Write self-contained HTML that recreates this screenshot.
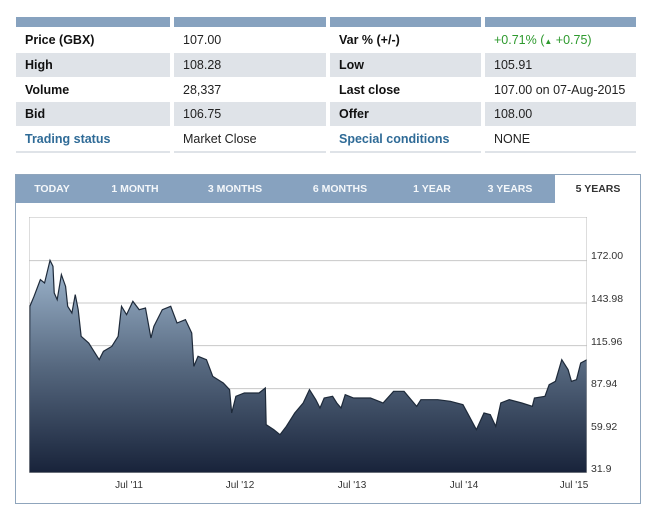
<!DOCTYPE html>
<html><head><style>
body{margin:0;width:660px;height:510px;background:#fff;font-family:"Liberation Sans",Arial,sans-serif;position:relative;overflow:hidden}
.a{position:absolute}
.hb{top:17px;height:10px;background:#87a2bf}
.c{position:absolute;height:24px;line-height:24px;font-size:12.5px;color:#222;padding-left:9px;box-sizing:border-box}
.g{background:#dfe3e8}
.b{font-weight:bold;color:#111}
.bl{color:#2f6b97;font-weight:bold}
.tab{position:absolute;top:175px;height:28px;line-height:28px;font-size:10.5px;font-weight:bold;color:#f4f7fa;text-align:center}
.yl{position:absolute;left:591px;font-size:10.5px;color:#333}
.xl{position:absolute;top:480px;font-size:10px;color:#333;width:40px;margin-left:-20px;text-align:center}
</style></head><body>
<div class="a hb" style="left:16px;width:154px"></div>
<div class="a hb" style="left:174px;width:152px"></div>
<div class="a hb" style="left:330px;width:151px"></div>
<div class="a hb" style="left:485px;width:151px"></div>

<div class="c b" style="left:16px;top:28px;width:154px">Price (GBX)</div>
<div class="c" style="left:174px;top:28px;width:152px">107.00</div>
<div class="c b" style="left:330px;top:28px;width:151px">Var % (+/-)</div>
<div class="c" style="left:485px;top:28px;width:151px;color:#2e9a2e">+0.71% (<span style="font-size:8px">&#9650;</span> +0.75)</div>

<div class="c b g" style="left:16px;top:53px;width:154px">High</div>
<div class="c g" style="left:174px;top:53px;width:152px">108.28</div>
<div class="c b g" style="left:330px;top:53px;width:151px">Low</div>
<div class="c g" style="left:485px;top:53px;width:151px">105.91</div>

<div class="c b" style="left:16px;top:78px;width:154px">Volume</div>
<div class="c" style="left:174px;top:78px;width:152px">28,337</div>
<div class="c b" style="left:330px;top:78px;width:151px">Last close</div>
<div class="c" style="left:485px;top:78px;width:151px">107.00 on 07-Aug-2015</div>

<div class="c b g" style="left:16px;top:102px;width:154px">Bid</div>
<div class="c g" style="left:174px;top:102px;width:152px">106.75</div>
<div class="c b g" style="left:330px;top:102px;width:151px">Offer</div>
<div class="c g" style="left:485px;top:102px;width:151px">108.00</div>

<div class="c bl" style="left:16px;top:127px;width:154px">Trading status</div>
<div class="c" style="left:174px;top:127px;width:152px">Market Close</div>
<div class="c bl" style="left:330px;top:127px;width:151px">Special conditions</div>
<div class="c" style="left:485px;top:127px;width:151px">NONE</div>
<div class="a" style="left:16px;top:151px;width:154px;height:2px;background:#dfe3e8"></div>
<div class="a" style="left:174px;top:151px;width:152px;height:2px;background:#dfe3e8"></div>
<div class="a" style="left:330px;top:151px;width:151px;height:2px;background:#dfe3e8"></div>
<div class="a" style="left:485px;top:151px;width:151px;height:2px;background:#dfe3e8"></div>

<div class="a" style="left:15px;top:174px;width:624px;height:328px;border:1px solid #8fa5bc"></div>
<div class="a" style="left:16px;top:175px;width:539px;height:28px;background:#87a2bf"></div>
<div class="tab" style="left:22px;width:60px">TODAY</div>
<div class="tab" style="left:100px;width:70px">1 MONTH</div>
<div class="tab" style="left:195px;width:80px">3 MONTHS</div>
<div class="tab" style="left:300px;width:80px">6 MONTHS</div>
<div class="tab" style="left:400px;width:64px">1 YEAR</div>
<div class="tab" style="left:475px;width:70px">3 YEARS</div>
<div class="tab" style="left:556px;width:84px;color:#333">5 YEARS</div>

<svg class="a" style="left:29px;top:217px" width="558" height="256" viewBox="68 52 1327 768" preserveAspectRatio="none">
<defs><linearGradient id="gr" x1="0" y1="0" x2="0" y2="1"><stop offset="0" stop-color="#a0b8d0"/><stop offset="0.5" stop-color="#56687f"/><stop offset="1" stop-color="#18233a"/></linearGradient></defs>
<g stroke="#c8c8c8" stroke-width="1" vector-effect="non-scaling-stroke">
<line x1="68" y1="183" x2="1395" y2="183" vector-effect="non-scaling-stroke"/>
<line x1="68" y1="310" x2="1395" y2="310" vector-effect="non-scaling-stroke"/>
<line x1="68" y1="438" x2="1395" y2="438" vector-effect="non-scaling-stroke"/>
<line x1="68" y1="567" x2="1395" y2="567" vector-effect="non-scaling-stroke"/>
</g>
<path fill="url(#gr)" stroke="#1e2a3a" stroke-width="1.2" vector-effect="non-scaling-stroke" d="M68 820 L70 320 L80 290 L95 240 L105 250 L118 182 L125 200 L128 280 L135 300 L145 225 L155 260 L160 320 L170 340 L178 285 L185 330 L192 410 L210 430 L235 480 L245 455 L265 440 L280 410 L288 320 L300 345 L315 305 L330 330 L345 325 L358 415 L365 380 L385 330 L405 320 L420 370 L440 360 L455 400 L460 500 L470 470 L490 480 L505 530 L530 550 L545 570 L550 640 L560 590 L580 580 L615 580 L630 565 L632 675 L650 690 L665 705 L680 680 L700 640 L720 610 L735 570 L750 600 L760 625 L770 595 L790 590 L800 610 L810 625 L820 585 L840 595 L880 595 L910 610 L935 575 L960 575 L970 590 L990 620 L1000 600 L1040 600 L1070 605 L1100 615 L1115 650 L1132 690 L1150 640 L1165 645 L1178 680 L1190 610 L1210 600 L1240 610 L1265 620 L1270 595 L1295 590 L1305 555 L1320 545 L1335 480 L1350 510 L1358 545 L1370 540 L1380 490 L1395 480 L1395 820 Z"/>
<rect x="68" y="52" width="1327" height="768" fill="none" stroke="#bbb" stroke-width="1" vector-effect="non-scaling-stroke"/>
</svg>
<div class="yl" style="top:250px">172.00</div>
<div class="yl" style="top:293px">143.98</div>
<div class="yl" style="top:336px">115.96</div>
<div class="yl" style="top:378px">87.94</div>
<div class="yl" style="top:421px">59.92</div>
<div class="yl" style="top:463px">31.9</div>
<div class="xl" style="left:129px">Jul '11</div>
<div class="xl" style="left:240px">Jul '12</div>
<div class="xl" style="left:352px">Jul '13</div>
<div class="xl" style="left:464px">Jul '14</div>
<div class="xl" style="left:574px">Jul '15</div>
</body></html>
